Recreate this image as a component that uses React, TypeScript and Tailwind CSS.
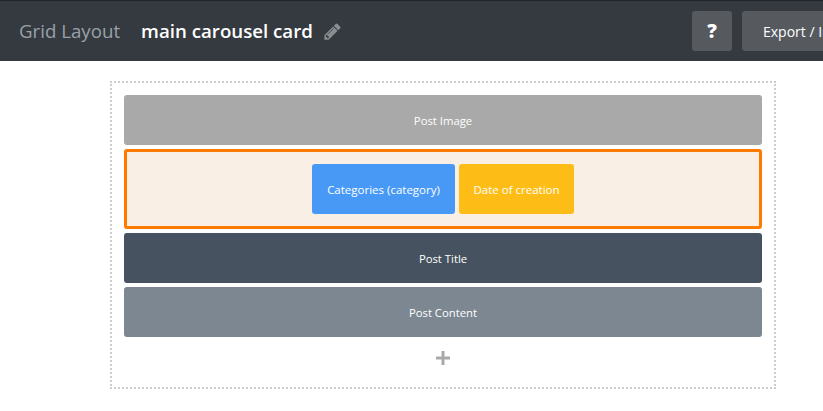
import React from 'react';

const Row = ({ label, className }: { label: string; className: string }) => (
  <div className={`h-[50px] pt-[2px] rounded-[3px] flex items-center justify-center text-[11.3px] text-white ${className}`}>
    {label}
  </div>
);

const PencilIcon = () => (
  <svg width="19" height="19" viewBox="0 0 1792 1792" fill="#8a8d90">
    <path d="M491 1536l91-91-235-235-91 91v107h128v128h107zm523-928q0-22-22-22-10 0-17 7l-542 542q-7 7-7 17 0 22 22 22 10 0 17-7l542-542q7-7 7-17zm-54-192l416 416-832 832h-416v-416zm683 96q0 53-37 90l-166 166-416-416 166-165q36-38 90-38 53 0 91 38l235 234q37 39 37 91z" />
  </svg>
);

const App: React.FC = () => {
  return (
    <div className="h-[411px] w-[823px] overflow-hidden bg-white font-['Open_Sans',sans-serif]">
      {/* Header */}
      <div className="h-[61px] bg-[#343a40] border-t border-[#212529] flex items-center justify-between pl-[19px]">
        <div className="flex items-center pt-[1px]">
          <span className="text-[18.7px] text-[#99a1a8]">Grid Layout</span>
          <span className="ml-[21px] text-[18.7px] font-semibold text-white">main carousel card</span>
          <span className="ml-[10px] flex items-center">
            <PencilIcon />
          </span>
        </div>
        <div className="flex items-center gap-[10px] shrink-0 -mr-[40px]">
          <button className="w-[40px] h-[40px] rounded-[3px] bg-[#565a5f] text-white text-[19px] font-extrabold flex items-center justify-center">
            ?
          </button>
          <button className="w-[121px] h-[40px] rounded-[3px] bg-[#565a5f] text-white text-[14px] text-left pl-[21px] whitespace-nowrap">
            Export / Import
          </button>
        </div>
      </div>

      {/* Builder */}
      <div className="mt-[20px] ml-[110px] w-[666px] h-[308px] border-2 border-dotted border-[#ccc] px-[12px] pt-[12px]">
        <div className="flex flex-col gap-[4px]">
          <Row label="Post Image" className="bg-[#a9a9a9]" />
          <div className="h-[80px] rounded-[3px] border-[3px] border-[#ff7b00] bg-[#f9efe5] flex items-center justify-center gap-[4px]">
            <div className="w-[143px] h-[50px] pt-[2px] rounded-[3px] bg-[#4899f6] flex items-center justify-center text-[11.5px] text-white">
              Categories (category)
            </div>
            <div className="w-[115px] h-[50px] pt-[2px] rounded-[3px] bg-[#febd16] flex items-center justify-center text-[11.5px] text-white">
              Date of creation
            </div>
          </div>
          <Row label="Post Title" className="bg-[#46525f]" />
          <Row label="Post Content" className="bg-[#7c8792]" />
        </div>
        <div className="mt-[14px] flex justify-center">
          <svg width="14" height="14" viewBox="0 0 14 14" fill="#a9a9a9">
            <rect x="5.5" y="0" width="3" height="14" rx="0.5" />
            <rect x="0" y="5.5" width="14" height="3" rx="0.5" />
          </svg>
        </div>
      </div>
    </div>
  );
};

export default App;
